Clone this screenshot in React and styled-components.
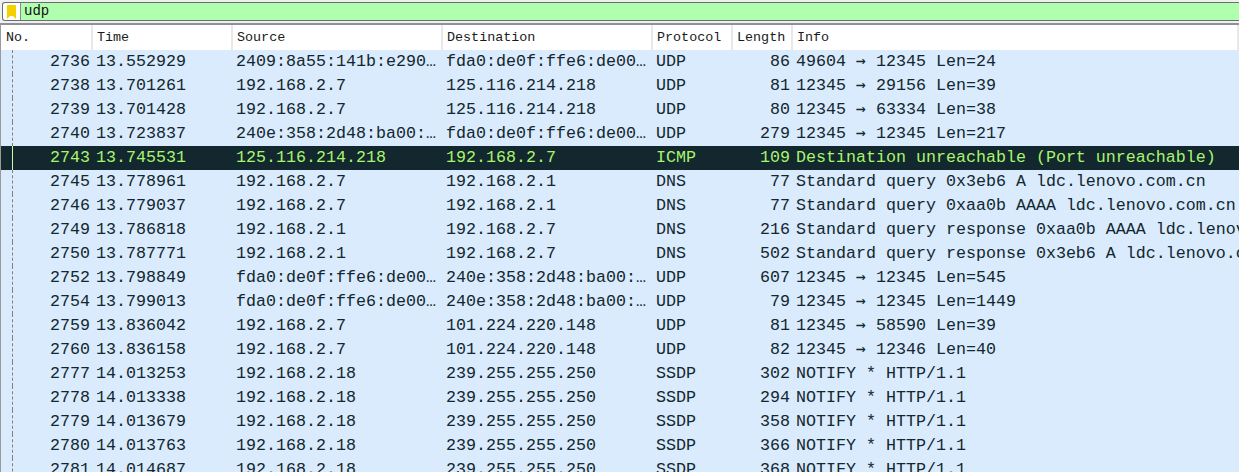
import React from "react";
import styled, { createGlobalStyle } from "styled-components";

const GlobalStyle = createGlobalStyle`
  html, body {
    margin: 0;
    padding: 0;
    height: 472px;
    overflow: hidden;
    background: #f0f0f0;
  }
`;

const COLUMNS = "92px 140px 210px 210px 80px 60px 1fr";

const Page = styled.div`
  width: 1239px;
  height: 472px;
  overflow: hidden;
  display: flex;
  flex-direction: column;
`;

const FilterBar = styled.div`
  flex: none;
  height: 17px;
  margin: 2px 0 0 2px;
  display: flex;
  border-top: 1px solid #6d6d6d;
  border-bottom: 1px solid #6d6d6d;
  border-left: 1px solid #6d6d6d;
  border-radius: 3px 0 0 3px;
  background: #afffaf;
`;

const BookmarkBox = styled.div`
  width: 17px;
  flex: none;
  display: flex;
  align-items: center;
  justify-content: center;
  background: #fff;
  border-right: 1px solid #8a8a8a;
  border-radius: 3px 0 0 3px;
`;

const FilterText = styled.div`
  padding-left: 3px;
  font: 14px/17px "Liberation Mono", monospace;
  color: #111;
`;

const Separator = styled.div`
  flex: none;
  height: 2px;
  background: #f0f0f0;
`;

const Table = styled.div`
  flex: none;
  border-top: 2px solid #8f8f96;
  border-left: 1px solid #9a9a9a;
  background: #d9ebfd;
`;

const HeaderRow = styled.div`
  display: grid;
  grid-template-columns: ${COLUMNS};
  height: 25px;
  background: #fff;
`;

const HeaderCell = styled.div`
  padding-left: ${(p) => p.$pad || 3}px;
  border-right: 2px solid #e8e8e8;
  font: 13.4px/25px "Liberation Mono", monospace;
  color: #1a1a1a;
  overflow: hidden;
  white-space: nowrap;
`;

const Row = styled.div`
  display: grid;
  grid-template-columns: ${COLUMNS};
  height: 24px;
  background: ${(p) => (p.$selected ? "#12272e" : "#d9ebfd")};
  color: ${(p) => (p.$selected ? "#a8f56c" : "#12272e")};
  font: 16.67px/24px "Liberation Mono", monospace;
`;

const Cell = styled.div`
  padding-left: ${(p) => p.$pad || 3}px;
  padding-right: ${(p) => (p.$right ? 3 : 0)}px;
  text-align: ${(p) => (p.$right ? "right" : "left")};
  white-space: nowrap;
  overflow: hidden;
`;

const NumberCell = styled(Cell)`
  position: relative;

  &::before {
    content: "";
    position: absolute;
    left: 11px;
    top: 0;
    bottom: 0;
    border-left: 1px ${(p) => (p.$selected ? "solid #d8f8a8" : "dashed #808080")};
  }
`;

// the mono font's own arrow is too thin and sits too low
const Arrow = styled.span`
  font-family: "DejaVu Sans Mono", monospace;
  font-size: 16.6px;
  line-height: 1;
`;

const rows = [
  ["2736", "13.552929", "2409:8a55:141b:e290…", "fda0:de0f:ffe6:de00…", "UDP", "86", "49604 → 12345 Len=24"],
  ["2738", "13.701261", "192.168.2.7", "125.116.214.218", "UDP", "81", "12345 → 29156 Len=39"],
  ["2739", "13.701428", "192.168.2.7", "125.116.214.218", "UDP", "80", "12345 → 63334 Len=38"],
  ["2740", "13.723837", "240e:358:2d48:ba00:…", "fda0:de0f:ffe6:de00…", "UDP", "279", "12345 → 12345 Len=217"],
  ["2743", "13.745531", "125.116.214.218", "192.168.2.7", "ICMP", "109", "Destination unreachable (Port unreachable)", true],
  ["2745", "13.778961", "192.168.2.7", "192.168.2.1", "DNS", "77", "Standard query 0x3eb6 A ldc.lenovo.com.cn"],
  ["2746", "13.779037", "192.168.2.7", "192.168.2.1", "DNS", "77", "Standard query 0xaa0b AAAA ldc.lenovo.com.cn"],
  ["2749", "13.786818", "192.168.2.1", "192.168.2.7", "DNS", "216", "Standard query response 0xaa0b AAAA ldc.lenovo.com.cn"],
  ["2750", "13.787771", "192.168.2.1", "192.168.2.7", "DNS", "502", "Standard query response 0x3eb6 A ldc.lenovo.com.cn"],
  ["2752", "13.798849", "fda0:de0f:ffe6:de00…", "240e:358:2d48:ba00:…", "UDP", "607", "12345 → 12345 Len=545"],
  ["2754", "13.799013", "fda0:de0f:ffe6:de00…", "240e:358:2d48:ba00:…", "UDP", "79", "12345 → 12345 Len=1449"],
  ["2759", "13.836042", "192.168.2.7", "101.224.220.148", "UDP", "81", "12345 → 58590 Len=39"],
  ["2760", "13.836158", "192.168.2.7", "101.224.220.148", "UDP", "82", "12345 → 12346 Len=40"],
  ["2777", "14.013253", "192.168.2.18", "239.255.255.250", "SSDP", "302", "NOTIFY * HTTP/1.1"],
  ["2778", "14.013338", "192.168.2.18", "239.255.255.250", "SSDP", "294", "NOTIFY * HTTP/1.1"],
  ["2779", "14.013679", "192.168.2.18", "239.255.255.250", "SSDP", "358", "NOTIFY * HTTP/1.1"],
  ["2780", "14.013763", "192.168.2.18", "239.255.255.250", "SSDP", "366", "NOTIFY * HTTP/1.1"],
  ["2781", "14.014687", "192.168.2.18", "239.255.255.250", "SSDP", "368", "NOTIFY * HTTP/1.1"],
];

const headers = ["No.", "Time", "Source", "Destination", "Protocol", "Length", "Info"];

const renderInfo = (info) => {
  const [before, after] = info.split("→");
  if (after === undefined) return info;
  return (
    <>
      {before}
      <Arrow>→</Arrow>
      {after}
    </>
  );
};

const App = () => (
  <Page>
    <GlobalStyle />
    <FilterBar>
      <BookmarkBox>
        <svg width="9" height="14" viewBox="0 0 9 14">
          <path d="M0 1 Q0 0 1 0 H8 Q9 0 9 1 V14 L6 11 H3 L0 14 Z" fill="#f5d000" />
        </svg>
      </BookmarkBox>
      <FilterText>udp</FilterText>
    </FilterBar>
    <Separator />
    <Table>
      <HeaderRow>
        {headers.map((h) => (
          <HeaderCell key={h} $pad={h === "No." ? 5 : 4}>
            {h}
          </HeaderCell>
        ))}
      </HeaderRow>
      {rows.map(([no, time, src, dst, proto, len, info, selected]) => (
        <Row key={no} $selected={selected}>
          <NumberCell $right $selected={selected}>
            {no}
          </NumberCell>
          <Cell>{time}</Cell>
          <Cell>{src}</Cell>
          <Cell>{dst}</Cell>
          <Cell>{proto}</Cell>
          <Cell $right>{len}</Cell>
          <Cell>{renderInfo(info)}</Cell>
        </Row>
      ))}
    </Table>
  </Page>
);

export default App;
